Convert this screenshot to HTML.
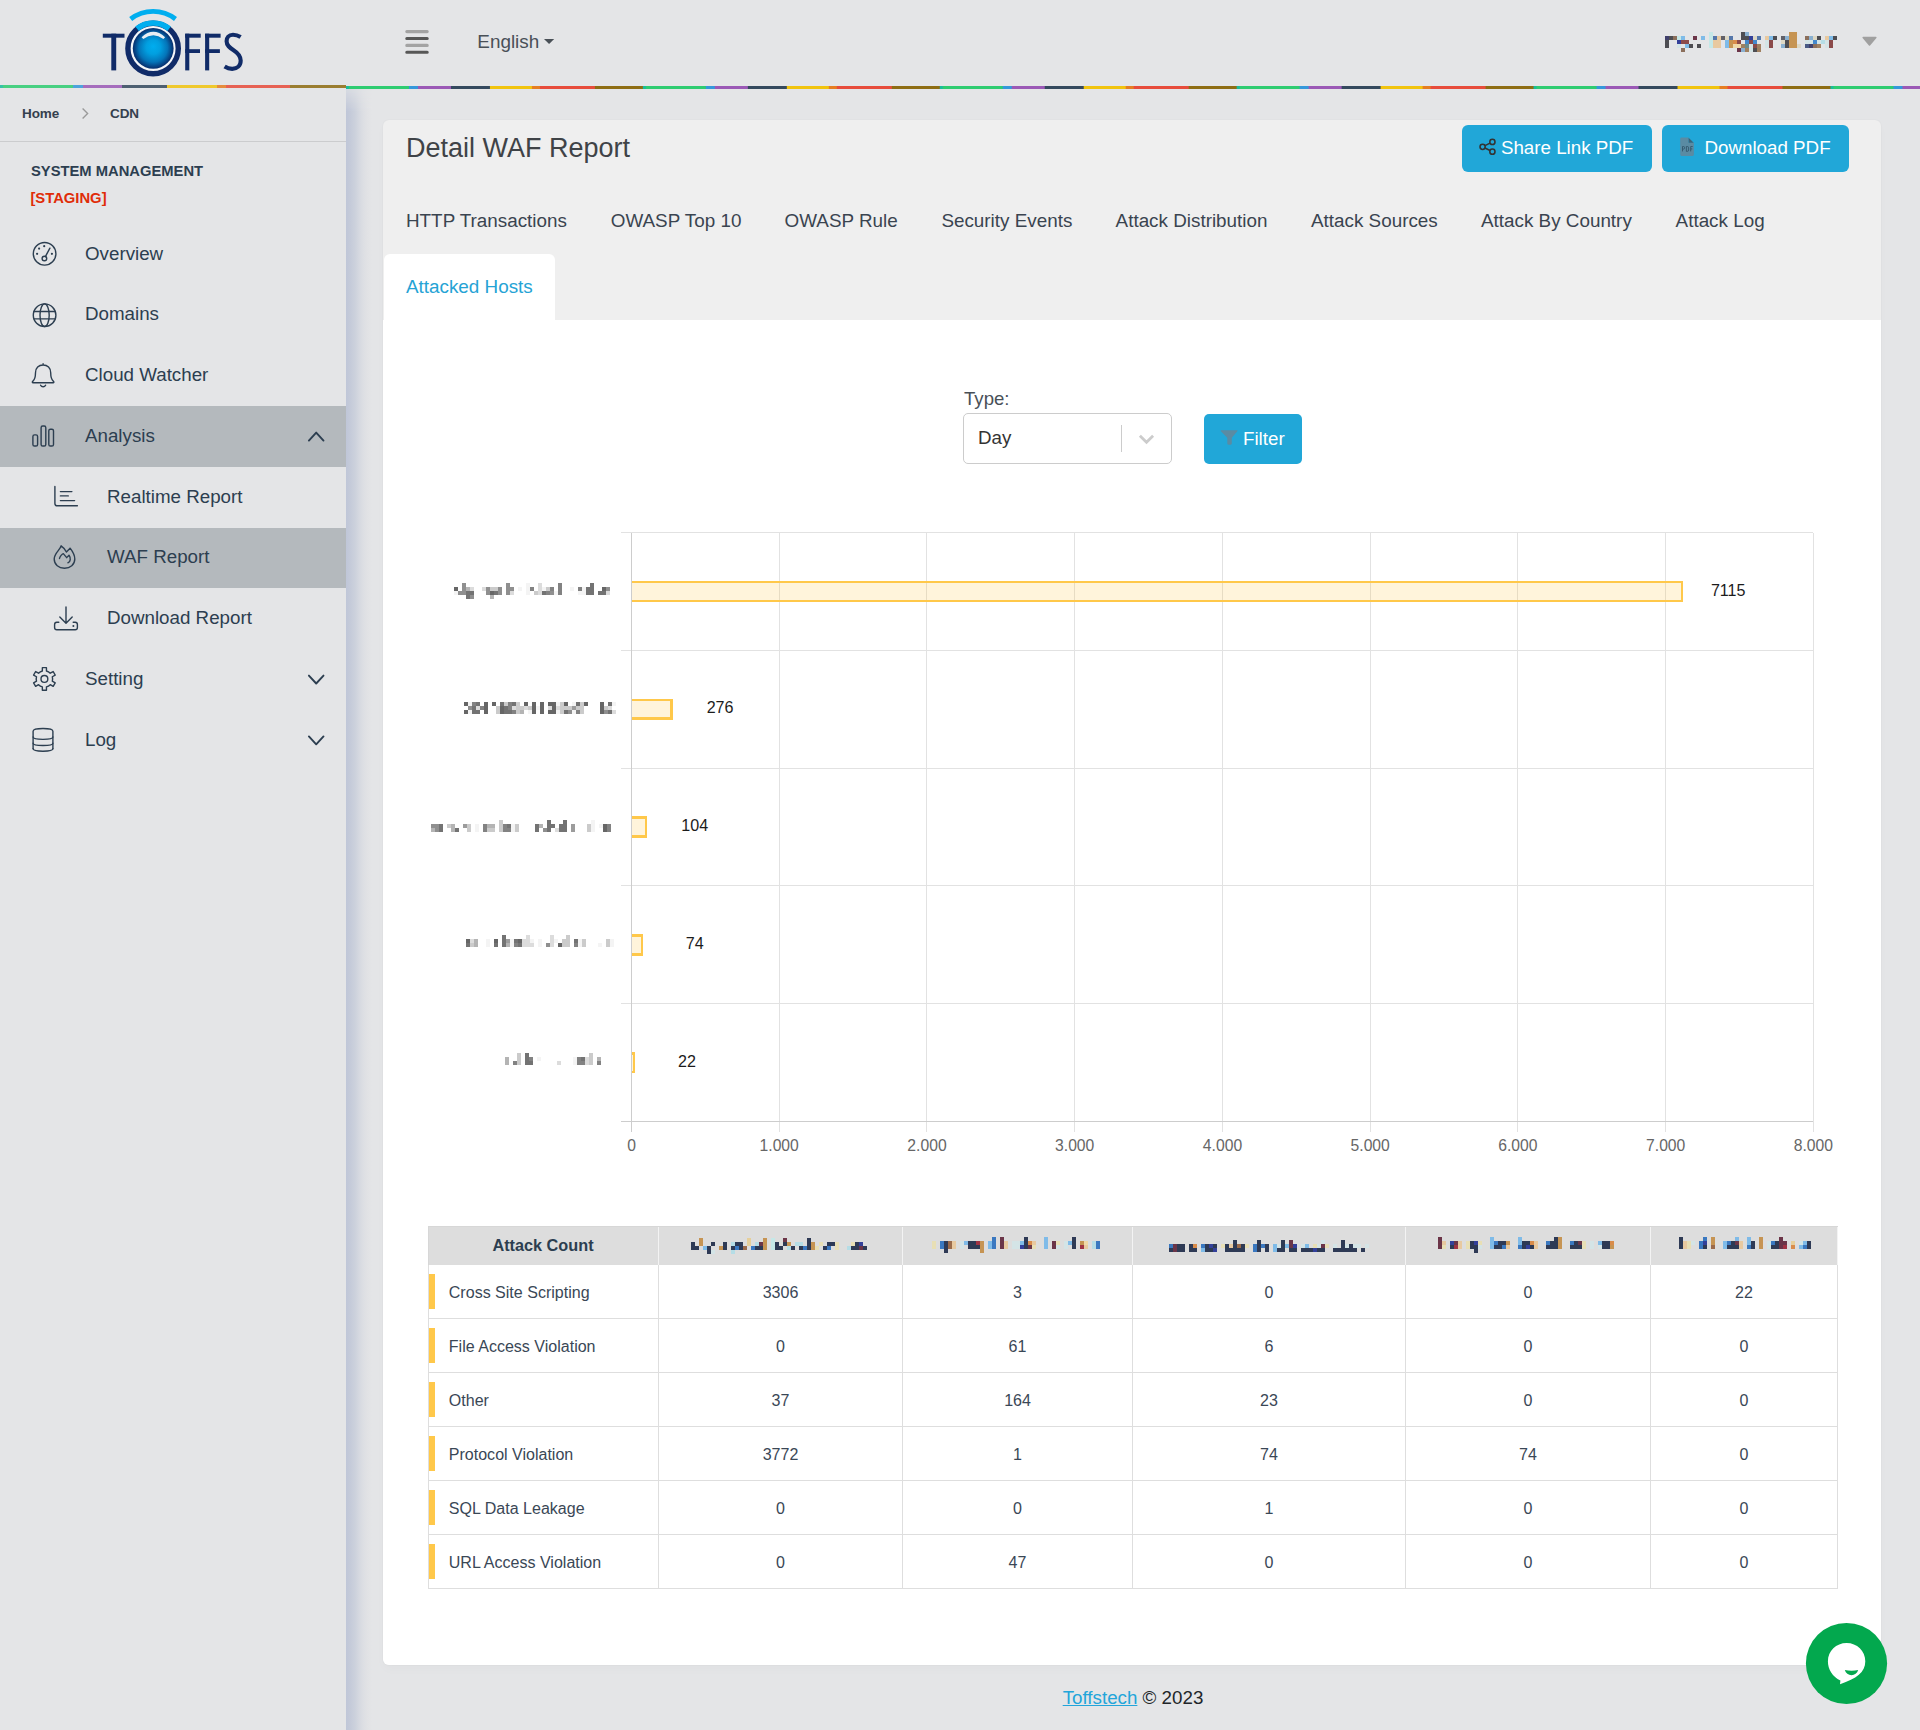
<!DOCTYPE html>
<html><head><meta charset="utf-8"><title>Detail WAF Report</title><style>
*{box-sizing:border-box;margin:0;padding:0}
html,body{width:1920px;height:1730px;overflow:hidden}
body{background:#e4e5e7;font-family:"Liberation Sans", sans-serif;color:#3f4347;position:relative;font-size:18.75px}
.abs{position:absolute}
.t{position:absolute;white-space:nowrap;line-height:1}
.stripe{position:absolute;height:3px;background-image:linear-gradient(to right,#1abc9c 0,#1abc9c 1%,#2ecc71 1%,#2ecc71 21.2%,#3498db 21.2%,#3498db 24.1%,#9b59b6 24.1%,#9b59b6 35.3%,#34495e 35.3%,#34495e 48.4%,#f1c40f 48.4%,#f1c40f 62.6%,#e67e22 62.6%,#e67e22 65.4%,#e74c3c 65.4%,#e74c3c 83.8%,#8e6d13 83.8%,#8e6d13 100%)}
#sb svg{position:absolute;overflow:visible}
.card{position:absolute;left:383px;top:120px;width:1498px;height:1545px;background:#efefef;border-radius:6px;overflow:hidden;box-shadow:0 0 2px rgba(4,9,20,.05),0 5px 10px rgba(4,9,20,.02)}
.card .body{position:absolute;left:0;top:200px;width:100%;bottom:0;background:#fff}
.tab{position:absolute;font-size:18.85px;color:#3a4450;white-space:nowrap;line-height:1}
.btn{position:absolute;background:#21a7d8;border-radius:6px;color:#fff;font-size:18.75px}
</style></head><body>

<svg class="abs" style="left:0;top:0" width="346" height="85" viewBox="0 0 346 85">
<defs><radialGradient id="ball" cx="0.5" cy="0.5" r="0.5" fx="0.5" fy="0.45">
<stop offset="0" stop-color="#00adef"/><stop offset="0.35" stop-color="#019fe0"/><stop offset="0.7" stop-color="#0474b8"/><stop offset="0.92" stop-color="#063f80"/><stop offset="1" stop-color="#072f6c"/></radialGradient></defs>
<g fill="#102b68">
<rect x="102.8" y="33.7" width="21.7" height="4"/><rect x="111.3" y="33.7" width="4.9" height="36.7"/>
<rect x="185.2" y="33.7" width="4.1" height="36.7"/><rect x="185.2" y="33.7" width="15.5" height="4"/><rect x="185.2" y="49.2" width="14.8" height="3.8"/>
<rect x="205.1" y="33.7" width="4.1" height="36.7"/><rect x="205.1" y="33.7" width="15.5" height="4"/><rect x="205.1" y="49.2" width="14.8" height="3.8"/>
</g>
<path d="M240.6 37 C238 35.4 235.4 34.8 233 34.8 C228.8 34.8 226.6 37.6 226.6 41.2 C226.6 45.4 229.6 47.6 233.6 50.2 C237.8 52.9 240.7 55.6 240.7 60.6 C240.7 65.6 237.2 68.9 232.2 68.9 C229.4 68.9 226.8 68 224.6 66.6" fill="none" stroke="#102b68" stroke-width="4.1"/>
<circle cx="153.1" cy="48.2" r="22.6" fill="#f4f6f9"/>
<circle cx="153.1" cy="48.5" r="25.2" fill="none" stroke="#102b68" stroke-width="5.4"/>
<circle cx="153.2" cy="48.4" r="20.4" fill="url(#ball)"/>
<path d="M130.70 19.00 A36.80 36.80 0 0 1 175.50 19.00" fill="none" stroke="#00aeef" stroke-width="4.9"/>
<path d="M137.04 28.78 A25.20 25.20 0 0 1 169.16 28.78" fill="none" stroke="#00aeef" stroke-width="5.6"/>
<path d="M141.6 37.2 Q153.3 26.5 165.1 37.2 L163.4 38.9 Q153.3 31.6 143.3 38.9 Z" fill="#e9eef3"/>
</svg>
<div class="stripe" style="left:0;top:85px;width:346px;opacity:.86"></div>
<div class="stripe" style="left:346px;top:86px;width:1574px;background-size:296.9px 3px"></div>
<svg class="abs" style="left:400px;top:25px" width="34" height="34" viewBox="400 25 34 34">
<g stroke-linecap="round" stroke-width="3.1"><path d="M406.8 31.6H427.2M406.8 45.4H427.2" stroke="#a3a3a3"/><path d="M406.8 38.5H427.2M406.8 52.2H427.2" stroke="#575757"/></g></svg>
<div class="t" style="left:477.3px;top:33.4px;font-size:18.9px;color:#495057">English</div>
<svg class="abs" style="left:544px;top:39px" width="11" height="6"><path d="M0 0H10.2L5.1 5.1Z" fill="#495057"/></svg>
<svg class="abs" style="left:1660px;top:28px" width="190" height="30" viewBox="1660 28 190 30" shape-rendering="crispEdges"><rect x="1709.0" y="31.7" width="4" height="4" fill="#c5e8e8"/><rect x="1741.0" y="31.7" width="4" height="4" fill="#4d4d52"/><rect x="1745.0" y="31.7" width="4" height="4" fill="#8ab0d0"/><rect x="1789.0" y="31.7" width="8" height="4" fill="#c69453"/><rect x="1665.0" y="35.7" width="4" height="4" fill="#3f3f6b"/><rect x="1669.0" y="35.7" width="4" height="4" fill="#4d4d52"/><rect x="1673.0" y="35.7" width="4" height="4" fill="#8b6f5c"/><rect x="1677.0" y="35.7" width="4" height="4" fill="#c5e8e8"/><rect x="1681.0" y="35.7" width="4" height="4" fill="#7fbbe8"/><rect x="1693.0" y="35.7" width="4" height="4" fill="#6b3548"/><rect x="1701.0" y="35.7" width="4" height="4" fill="#7fbbe8"/><rect x="1709.0" y="35.7" width="4" height="4" fill="#c5e8e8"/><rect x="1713.0" y="35.7" width="4" height="4" fill="#5577aa"/><rect x="1717.0" y="35.7" width="4" height="4" fill="#e8c9a0"/><rect x="1721.0" y="35.7" width="4" height="4" fill="#606068"/><rect x="1725.0" y="35.7" width="4" height="4" fill="#ddd8c5"/><rect x="1729.0" y="35.7" width="4" height="4" fill="#5577aa"/><rect x="1741.0" y="35.7" width="8" height="4" fill="#4d4d52"/><rect x="1749.0" y="35.7" width="4" height="4" fill="#33409a"/><rect x="1753.0" y="35.7" width="4" height="4" fill="#ddd8c5"/><rect x="1757.0" y="35.7" width="4" height="4" fill="#5577aa"/><rect x="1765.0" y="35.7" width="4" height="4" fill="#e8c9a0"/><rect x="1769.0" y="35.7" width="4" height="4" fill="#7fbbe8"/><rect x="1773.0" y="35.7" width="4" height="4" fill="#4d4d52"/><rect x="1781.0" y="35.7" width="4" height="4" fill="#606068"/><rect x="1785.0" y="35.7" width="4" height="4" fill="#8ab0d0"/><rect x="1789.0" y="35.7" width="8" height="4" fill="#c69453"/><rect x="1805.0" y="35.7" width="4" height="4" fill="#8b6f5c"/><rect x="1809.0" y="35.7" width="4" height="4" fill="#8ab0d0"/><rect x="1813.0" y="35.7" width="4" height="4" fill="#ddd8c5"/><rect x="1817.0" y="35.7" width="4" height="4" fill="#4d4d52"/><rect x="1825.0" y="35.7" width="4" height="4" fill="#e8c9a0"/><rect x="1829.0" y="35.7" width="4" height="4" fill="#7fbbe8"/><rect x="1833.0" y="35.7" width="4" height="4" fill="#4d4d52"/><rect x="1665.0" y="39.7" width="4" height="4" fill="#4d4d52"/><rect x="1677.0" y="39.7" width="4" height="4" fill="#33409a"/><rect x="1681.0" y="39.7" width="8" height="4" fill="#8b4a4a"/><rect x="1709.0" y="39.7" width="4" height="4" fill="#c5e8e8"/><rect x="1713.0" y="39.7" width="8" height="4" fill="#e8c9a0"/><rect x="1725.0" y="39.7" width="4" height="4" fill="#7fbbe8"/><rect x="1729.0" y="39.7" width="4" height="4" fill="#c69453"/><rect x="1733.0" y="39.7" width="4" height="4" fill="#d98c4a"/><rect x="1737.0" y="39.7" width="4" height="4" fill="#8b4a4a"/><rect x="1745.0" y="39.7" width="4" height="4" fill="#4488cc"/><rect x="1749.0" y="39.7" width="4" height="4" fill="#8b4a4a"/><rect x="1753.0" y="39.7" width="4" height="4" fill="#4488cc"/><rect x="1765.0" y="39.7" width="4" height="4" fill="#d4e4e6"/><rect x="1769.0" y="39.7" width="4" height="4" fill="#8b4a4a"/><rect x="1781.0" y="39.7" width="4" height="4" fill="#ddd8c5"/><rect x="1785.0" y="39.7" width="4" height="4" fill="#4d4d52"/><rect x="1789.0" y="39.7" width="8" height="4" fill="#c69453"/><rect x="1805.0" y="39.7" width="8" height="4" fill="#d4e4e6"/><rect x="1813.0" y="39.7" width="4" height="4" fill="#4488cc"/><rect x="1817.0" y="39.7" width="4" height="4" fill="#d4e4e6"/><rect x="1821.0" y="39.7" width="4" height="4" fill="#b5dde6"/><rect x="1825.0" y="39.7" width="4" height="4" fill="#d4e4e6"/><rect x="1829.0" y="39.7" width="4" height="4" fill="#8b4a4a"/><rect x="1665.0" y="43.7" width="4" height="4" fill="#4d4d52"/><rect x="1677.0" y="43.7" width="4" height="4" fill="#d4e4e6"/><rect x="1685.0" y="43.7" width="4" height="4" fill="#7fbbe8"/><rect x="1689.0" y="43.7" width="4" height="4" fill="#4d4d52"/><rect x="1697.0" y="43.7" width="4" height="4" fill="#4d4d52"/><rect x="1709.0" y="43.7" width="4" height="4" fill="#c5e8e8"/><rect x="1713.0" y="43.7" width="8" height="4" fill="#e8c9a0"/><rect x="1725.0" y="43.7" width="4" height="4" fill="#7fbbe8"/><rect x="1729.0" y="43.7" width="4" height="4" fill="#c69453"/><rect x="1733.0" y="43.7" width="8" height="4" fill="#f0d8a8"/><rect x="1741.0" y="43.7" width="4" height="4" fill="#a08060"/><rect x="1745.0" y="43.7" width="4" height="4" fill="#6d8a8a"/><rect x="1749.0" y="43.7" width="4" height="4" fill="#d4e4e6"/><rect x="1753.0" y="43.7" width="4" height="4" fill="#8b4a4a"/><rect x="1757.0" y="43.7" width="4" height="4" fill="#a08060"/><rect x="1765.0" y="43.7" width="4" height="4" fill="#d4e4e6"/><rect x="1769.0" y="43.7" width="4" height="4" fill="#8b4a4a"/><rect x="1781.0" y="43.7" width="4" height="4" fill="#8ab0d0"/><rect x="1785.0" y="43.7" width="4" height="4" fill="#4d4d52"/><rect x="1789.0" y="43.7" width="8" height="4" fill="#c69453"/><rect x="1797.0" y="43.7" width="4" height="4" fill="#ddd8c5"/><rect x="1805.0" y="43.7" width="4" height="4" fill="#4a5a85"/><rect x="1809.0" y="43.7" width="4" height="4" fill="#3f3f6b"/><rect x="1813.0" y="43.7" width="4" height="4" fill="#8b6f5c"/><rect x="1817.0" y="43.7" width="4" height="4" fill="#a08060"/><rect x="1825.0" y="43.7" width="4" height="4" fill="#d4e4e6"/><rect x="1829.0" y="43.7" width="4" height="4" fill="#8b4a4a"/><rect x="1681.0" y="47.7" width="4" height="4" fill="#8b6f5c"/><rect x="1737.0" y="47.7" width="4" height="4" fill="#6b3548"/><rect x="1741.0" y="47.7" width="4" height="4" fill="#8ab0d0"/><rect x="1745.0" y="47.7" width="4" height="4" fill="#a08060"/><rect x="1749.0" y="47.7" width="4" height="4" fill="#d4e4e6"/><rect x="1753.0" y="47.7" width="4" height="4" fill="#4d4d52"/><rect x="1757.0" y="47.7" width="4" height="4" fill="#a08060"/></svg>
<svg class="abs" style="left:1860px;top:35px" width="20" height="13" viewBox="1860 35 20 13"><path d="M1863.2 37.6H1875.8L1869.5 45Z" fill="#a0a0a0" stroke="#a0a0a0" stroke-width="1.6" stroke-linejoin="round"/></svg>

<div class="t" style="left:22px;top:106.7px;font-size:13.5px;font-weight:bold;color:#34404e;letter-spacing:-0.1px">Home</div>
<svg class="abs" style="left:80px;top:106px" width="12" height="14"><path d="M2.6 2.6L7.6 7.6L2.6 12.4" fill="none" stroke="#9a9a9a" stroke-width="1.4"/></svg>
<div class="t" style="left:110px;top:106.7px;font-size:13.5px;font-weight:bold;color:#34404e;letter-spacing:-0.1px">CDN</div>
<div class="abs" style="left:0;top:141px;width:346px;height:1px;background:#cbccce"></div>
<div class="t" style="left:31px;top:164.1px;font-size:14.75px;font-weight:bold;color:#2c3e50">SYSTEM MANAGEMENT</div>
<div class="t" style="left:30.4px;top:191.1px;font-size:14.8px;font-weight:bold;color:#e02c08">[STAGING]</div>
<div id="sb"><div class="t" style="left:85px;top:244.70px;font-size:18.75px;color:#2c3e50">Overview</div><div class="t" style="left:85px;top:305.45px;font-size:18.75px;color:#2c3e50">Domains</div><div class="t" style="left:85px;top:366.20px;font-size:18.75px;color:#2c3e50">Cloud Watcher</div><div class="abs" style="left:0;top:406.2px;width:346px;height:60.4px;background:#b4b9bd"></div><div class="t" style="left:85px;top:426.95px;font-size:18.75px;color:#2c3e50">Analysis</div><div class="t" style="left:107px;top:487.70px;font-size:18.75px;color:#2c3e50">Realtime Report</div><div class="abs" style="left:0;top:528.1px;width:346px;height:59.8px;background:#b4b9bd"></div><div class="t" style="left:107px;top:548.45px;font-size:18.75px;color:#2c3e50">WAF Report</div><div class="t" style="left:107px;top:609.20px;font-size:18.75px;color:#2c3e50">Download Report</div><div class="t" style="left:85px;top:669.95px;font-size:18.75px;color:#2c3e50">Setting</div><div class="t" style="left:85px;top:730.70px;font-size:18.75px;color:#2c3e50">Log</div><svg style="left:0;top:0" width="346" height="800" viewBox="0 0 346 800"><g stroke="#2c3e50" fill="none" stroke-width="1.4" stroke-linecap="round" stroke-linejoin="round"><circle cx="44.6" cy="253.8" r="11.3"/><circle cx="44.4" cy="258.5" r="2.3"/><path d="M45.5 256.40000000000003L49.9 248.20000000000002"/></g>
<g fill="#2c3e50"><circle cx="37.1" cy="253.8" r="1.1"/><circle cx="39.1" cy="248.60000000000002" r="1.1"/><circle cx="44.2" cy="246.20000000000002" r="1.1"/><circle cx="51.9" cy="253.8" r="1.1"/></g><g stroke="#2c3e50" fill="none" stroke-width="1.4" stroke-linecap="round" stroke-linejoin="round"><circle cx="44.6" cy="315.15000000000003" r="11.3"/><ellipse cx="44.6" cy="315.15000000000003" rx="4.6" ry="11.3"/><path d="M34.0 311.45000000000005H55.2M34.0 318.85H55.2"/></g><g stroke="#2c3e50" fill="none" stroke-width="1.4" stroke-linecap="round" stroke-linejoin="round"><path d="M43.1 363.8V365.0M32.8 382.7H53.400000000000006C54.0 382.7 54.1 381.8 53.5 381.40000000000003C50.7 379.0 50.7 375.8 50.7 372.7C50.7 368.0 47.5 365.0 43.1 365.0C38.7 365.0 35.5 368.0 35.5 372.7C35.5 375.8 35.5 379.0 32.7 381.40000000000003C32.1 381.8 32.2 382.7 32.8 382.7Z"/><path d="M40.6 385.2C41.6 387.2 44.6 387.2 45.6 385.2"/></g><g stroke="#2c3e50" fill="none" stroke-width="1.4" stroke-linecap="round" stroke-linejoin="round"><rect x="32.9" y="434.85" width="4.7" height="11.2" rx="1.6"/><rect x="41.1" y="426.05" width="4.7" height="20" rx="1.6"/><rect x="48.8" y="429.25" width="4.7" height="16.8" rx="1.6"/></g><path d="M308.9 440.6L316.2 432.6L323.5 440.6" fill="none" stroke="#2c3e50" stroke-width="1.9" stroke-linecap="round" stroke-linejoin="round"/><g stroke="#2c3e50" fill="none" stroke-width="1.4" stroke-linecap="round" stroke-linejoin="round"><path d="M54.9 486.5V503.40000000000003Q54.9 505.8 57.3 505.8H77.4"/><path d="M60.4 491.6H71.9M60.4 495.90000000000003H68.3M60.4 500.6H74.6"/></g><g stroke="#2c3e50" fill="none" stroke-width="1.4" stroke-linecap="round" stroke-linejoin="round"><path d="M61.1 545.8499999999999C60.3 549.75 54.2 553.15 54.2 559.05C54.2 564.75 58.8 568.25 64.5 568.25C70.2 568.25 74.8 564.75 74.8 559.05C74.8 554.75 72.5 551.25 70.1 548.15L66.4 552.05C65.4 549.75 63.2 547.25 61.1 545.8499999999999Z"/><path d="M59.5 558.4499999999999C59.9 556.3499999999999 62.1 554.05 63.3 553.65L66.7 557.65L69.0 555.15C70.9 557.8499999999999 70.8 561.65 67.9 562.8499999999999"/></g><g stroke="#2c3e50" fill="none" stroke-width="1.4" stroke-linecap="round" stroke-linejoin="round"><path d="M66 606.9V622.9M59.8 617.0L66 623.1999999999999L72.2 617.0"/><path d="M58.8 622.3H56.8Q54.6 622.3 54.6 624.5V627.5Q54.6 629.6999999999999 56.8 629.6999999999999H75.2Q77.4 629.6999999999999 77.4 627.5V624.5Q77.4 622.3 75.2 622.3H73.2"/></g><circle cx="73.4" cy="625.9" r="1" fill="#2c3e50"/><g stroke="#2c3e50" fill="none" stroke-width="1.4" stroke-linecap="round" stroke-linejoin="round"><path d="M42.35 671.01L42.35 667.65L46.45 667.65L46.45 671.01A8.20 8.20 0 0 1 50.25 673.20L53.16 671.52L55.21 675.08L52.30 676.76A8.20 8.20 0 0 1 52.30 681.14L55.21 682.82L53.16 686.38L50.25 684.70A8.20 8.20 0 0 1 46.45 686.89L46.45 690.25L42.35 690.25L42.35 686.89A8.20 8.20 0 0 1 38.55 684.70L35.64 686.38L33.59 682.82L36.50 681.14A8.20 8.20 0 0 1 36.50 676.76L33.59 675.08L35.64 671.52L38.55 673.20A8.20 8.20 0 0 1 42.35 671.01Z"/><circle cx="44.4" cy="678.9499999999999" r="3.4"/></g><path d="M308.9 675.6L316.2 683.5L323.5 675.6" fill="none" stroke="#2c3e50" stroke-width="1.9" stroke-linecap="round" stroke-linejoin="round"/><g stroke="#2c3e50" fill="none" stroke-width="1.4" stroke-linecap="round" stroke-linejoin="round"><path d="M33.1 748.8V731.1999999999999C33.1 729.3 37.8 728.55 43.0 728.55C48.2 728.55 52.9 729.3 52.9 731.1999999999999V748.8"/><path d="M33.1 737.0C33.1 738.7625 37.8 739.35 43.0 739.35C48.2 739.35 52.9 738.7625 52.9 737.0"/><path d="M33.1 743.1999999999999C33.1 744.925 37.8 745.4999999999999 43.0 745.4999999999999C48.2 745.4999999999999 52.9 744.925 52.9 743.1999999999999"/><path d="M33.1 748.8C33.1 750.5999999999999 37.8 751.1999999999999 43.0 751.1999999999999C48.2 751.1999999999999 52.9 750.5999999999999 52.9 748.8"/></g><path d="M308.9 736.4L316.2 744.3L323.5 736.4" fill="none" stroke="#2c3e50" stroke-width="1.9" stroke-linecap="round" stroke-linejoin="round"/></svg></div>
<div class="abs" style="left:346px;top:89px;width:26px;height:1641px;background:linear-gradient(to right,#bfc6d8 0,#c4cad9 15%,#ccd1dc 35%,#d5d8e0 50%,#dcdee3 65%,#e1e2e5 82%,#e4e5e7 100%);-webkit-mask-image:linear-gradient(to bottom,rgba(0,0,0,.35) 0,#000 22px);mask-image:linear-gradient(to bottom,rgba(0,0,0,.35) 0,#000 22px)"></div>

<div class="card">
<div class="body"></div>
<div class="t" style="left:23px;top:14.8px;font-size:27px;color:#3f4347">Detail WAF Report</div>
<div class="tab" style="left:23px;top:91.80000000000001px">HTTP Transactions</div><div class="tab" style="left:227.79999999999995px;top:91.80000000000001px">OWASP Top 10</div><div class="tab" style="left:401.6px;top:91.80000000000001px">OWASP Rule</div><div class="tab" style="left:558.4px;top:91.80000000000001px">Security Events</div><div class="tab" style="left:732.5999999999999px;top:91.80000000000001px">Attack Distribution</div><div class="tab" style="left:928px;top:91.80000000000001px">Attack Sources</div><div class="tab" style="left:1098px;top:91.80000000000001px">Attack By Country</div><div class="tab" style="left:1292.6px;top:91.80000000000001px">Attack Log</div>
<div class="abs" style="left:1px;top:133.7px;width:171px;height:70px;background:#fff;border-radius:6px 6px 0 0"></div>
<div class="tab" style="left:23px;top:157.8px;color:#25a3d5">Attacked Hosts</div>
<div class="btn" style="left:1079px;top:5px;width:190px;height:47px"><span class="t" style="left:38.9px;top:13.5px;color:#fff">Share Link PDF</span>
<svg class="abs" style="left:16px;top:13px" width="20" height="20" viewBox="1478 138 20 20"><g fill="none" stroke="#333" stroke-width="1.55"><circle cx="1492.4" cy="141.9" r="2.6"/><circle cx="1482.6" cy="146.8" r="2.6"/><circle cx="1492.4" cy="151.7" r="2.6"/><path d="M1485 145.6L1490 143.1M1485 148L1490 150.5"/></g></svg></div>
<div class="btn" style="left:1279px;top:5px;width:187px;height:47px"><span class="t" style="left:42.5px;top:13.5px;color:#fff">Download PDF</span>
<svg class="abs" style="left:16px;top:10px" width="20" height="24" viewBox="1678 135 20 24"><path d="M1681.5 137.5H1688.6V142.7H1693.9V154.6Q1693.9 155.9 1692.6 155.9H1681.5Q1680.2 155.9 1680.2 154.6V138.8Q1680.2 137.5 1681.5 137.5Z" fill="#5a8ba3"/><path d="M1688.6 137.7L1693.7 142.7H1688.6Z" fill="#3c6378"/><g fill="none" stroke="#35596e" stroke-width="0.95"><path d="M1682.5 151.4V146.5H1683.5Q1684.6 146.5 1684.6 147.8Q1684.6 149.1 1683.5 149.1H1682.5"/><path d="M1686.4 146.5V151.4H1687.3Q1688.6 151.4 1688.6 150.1V147.8Q1688.6 146.5 1687.3 146.5Z"/><path d="M1690.7 151.4V146.5H1692.7M1690.7 148.9H1692.3"/></g></svg></div>
</div>

<div class="t" style="left:964px;top:389.6px;font-size:18.6px;color:#495057">Type:</div>
<div class="abs" style="left:963px;top:413px;width:209px;height:51px;border:1px solid #ccc;border-radius:5px;background:#fff"></div>
<div class="t" style="left:978px;top:428.5px;font-size:18.75px;color:#333">Day</div>
<div class="abs" style="left:1121px;top:425px;width:1px;height:27px;background:#ccc"></div>
<svg class="abs" style="left:1136px;top:430px" width="22" height="18" viewBox="1136 430 22 18"><path d="M1139.9 435.8L1146.5 442.3L1153.1 435.8" fill="none" stroke="#ccc" stroke-width="2.8" stroke-linecap="butt" stroke-linejoin="miter"/></svg>
<div class="btn" style="left:1204px;top:414px;width:98px;height:50px;border-radius:5px"><span class="t" style="left:39px;top:15.6px;color:#fff">Filter</span>
<svg class="abs" style="left:16px;top:16px" width="18" height="16" viewBox="0 0 18 16"><path d="M1.3 0.2H16.9Q18.1 0.2 17.3 1.2L11.8 7.7V13.6Q11.8 14.7 10.7 14.7H8.4Q7.3 14.7 7.3 13.6V7.7L0.9 1.2Q0.1 0.2 1.3 0.2Z" fill="#5a8ba3"/></svg></div>
<svg class="abs" style="left:420px;top:520px" width="1440" height="640" viewBox="420 520 1440 640" shape-rendering="crispEdges"><rect x="778.74" y="532.5" width="1" height="599.0999999999999" fill="#e2e2e2"/><rect x="926.48" y="532.5" width="1" height="599.0999999999999" fill="#e2e2e2"/><rect x="1074.21" y="532.5" width="1" height="599.0999999999999" fill="#e2e2e2"/><rect x="1221.95" y="532.5" width="1" height="599.0999999999999" fill="#e2e2e2"/><rect x="1369.69" y="532.5" width="1" height="599.0999999999999" fill="#e2e2e2"/><rect x="1517.43" y="532.5" width="1" height="599.0999999999999" fill="#e2e2e2"/><rect x="1665.16" y="532.5" width="1" height="599.0999999999999" fill="#e2e2e2"/><rect x="1812.90" y="532.5" width="1" height="599.0999999999999" fill="#e2e2e2"/><rect x="621" y="532.00" width="1192.4" height="1" fill="#e2e2e2"/><rect x="621" y="649.82" width="1192.4" height="1" fill="#e2e2e2"/><rect x="621" y="767.64" width="1192.4" height="1" fill="#e2e2e2"/><rect x="621" y="885.46" width="1192.4" height="1" fill="#e2e2e2"/><rect x="621" y="1003.28" width="1192.4" height="1" fill="#e2e2e2"/><rect x="621" y="1121.00" width="1192.4" height="1.2" fill="#cdcdcd"/><rect x="630.90" y="532.5" width="1.2" height="599.0999999999999" fill="#cdcdcd"/><rect x="632.10" y="583.26" width="1048.65" height="16.3" fill="rgba(255,200,74,0.2)"/><rect x="632.10" y="580.76" width="1051.15" height="2.5" fill="#ffc84a"/><rect x="632.10" y="599.56" width="1051.15" height="2.5" fill="#ffc84a"/><rect x="1680.75" y="580.76" width="2.5" height="21.3" fill="#ffc84a"/><rect x="632.10" y="701.08" width="38.28" height="16.3" fill="rgba(255,200,74,0.2)"/><rect x="632.10" y="698.58" width="40.78" height="2.5" fill="#ffc84a"/><rect x="632.10" y="717.38" width="40.78" height="2.5" fill="#ffc84a"/><rect x="670.38" y="698.58" width="2.5" height="21.3" fill="#ffc84a"/><rect x="632.10" y="818.90" width="12.86" height="16.3" fill="rgba(255,200,74,0.2)"/><rect x="632.10" y="816.40" width="15.36" height="2.5" fill="#ffc84a"/><rect x="632.10" y="835.20" width="15.36" height="2.5" fill="#ffc84a"/><rect x="644.96" y="816.40" width="2.5" height="21.3" fill="#ffc84a"/><rect x="632.10" y="936.72" width="8.43" height="16.3" fill="rgba(255,200,74,0.2)"/><rect x="632.10" y="934.22" width="10.93" height="2.5" fill="#ffc84a"/><rect x="632.10" y="953.02" width="10.93" height="2.5" fill="#ffc84a"/><rect x="640.53" y="934.22" width="2.5" height="21.3" fill="#ffc84a"/><rect x="632.10" y="1054.54" width="0.75" height="16.3" fill="rgba(255,200,74,0.2)"/><rect x="632.10" y="1052.04" width="3.25" height="2.5" fill="#ffc84a"/><rect x="632.10" y="1070.84" width="3.25" height="2.5" fill="#ffc84a"/><rect x="632.85" y="1052.04" width="2.5" height="21.3" fill="#ffc84a"/><rect x="462.0" y="583.0" width="4" height="4" fill="#8f8f8f"/><rect x="506.0" y="583.0" width="4" height="4" fill="#8f8f8f"/><rect x="526.0" y="583.0" width="4" height="4" fill="#f4f4f4"/><rect x="538.0" y="583.0" width="4" height="4" fill="#dcdcdc"/><rect x="558.0" y="583.0" width="4" height="4" fill="#828282"/><rect x="590.0" y="583.0" width="4" height="4" fill="#737373"/><rect x="454.0" y="587.0" width="4" height="4" fill="#666666"/><rect x="462.0" y="587.0" width="4" height="4" fill="#8f8f8f"/><rect x="466.0" y="587.0" width="4" height="4" fill="#b4b4b4"/><rect x="470.0" y="587.0" width="4" height="4" fill="#dcdcdc"/><rect x="482.0" y="587.0" width="4" height="4" fill="#dcdcdc"/><rect x="486.0" y="587.0" width="4" height="4" fill="#8f8f8f"/><rect x="490.0" y="587.0" width="8" height="4" fill="#cbcbcb"/><rect x="498.0" y="587.0" width="4" height="4" fill="#8f8f8f"/><rect x="506.0" y="587.0" width="8" height="4" fill="#8f8f8f"/><rect x="518.0" y="587.0" width="4" height="4" fill="#f4f4f4"/><rect x="526.0" y="587.0" width="4" height="4" fill="#f4f4f4"/><rect x="530.0" y="587.0" width="4" height="4" fill="#828282"/><rect x="538.0" y="587.0" width="4" height="4" fill="#dcdcdc"/><rect x="542.0" y="587.0" width="4" height="4" fill="#f4f4f4"/><rect x="546.0" y="587.0" width="4" height="4" fill="#cbcbcb"/><rect x="550.0" y="587.0" width="4" height="4" fill="#828282"/><rect x="558.0" y="587.0" width="4" height="4" fill="#828282"/><rect x="570.0" y="587.0" width="4" height="4" fill="#f4f4f4"/><rect x="578.0" y="587.0" width="4" height="4" fill="#828282"/><rect x="582.0" y="587.0" width="4" height="4" fill="#f4f4f4"/><rect x="586.0" y="587.0" width="8" height="4" fill="#737373"/><rect x="602.0" y="587.0" width="4" height="4" fill="#666666"/><rect x="606.0" y="587.0" width="4" height="4" fill="#8f8f8f"/><rect x="454.0" y="591.0" width="4" height="4" fill="#f4f4f4"/><rect x="458.0" y="591.0" width="8" height="4" fill="#8f8f8f"/><rect x="466.0" y="591.0" width="8" height="4" fill="#737373"/><rect x="486.0" y="591.0" width="4" height="4" fill="#8f8f8f"/><rect x="490.0" y="591.0" width="4" height="4" fill="#666666"/><rect x="494.0" y="591.0" width="4" height="4" fill="#737373"/><rect x="498.0" y="591.0" width="4" height="4" fill="#8f8f8f"/><rect x="506.0" y="591.0" width="4" height="4" fill="#8f8f8f"/><rect x="510.0" y="591.0" width="4" height="4" fill="#dcdcdc"/><rect x="526.0" y="591.0" width="4" height="4" fill="#f4f4f4"/><rect x="534.0" y="591.0" width="4" height="4" fill="#cbcbcb"/><rect x="538.0" y="591.0" width="4" height="4" fill="#dcdcdc"/><rect x="542.0" y="591.0" width="4" height="4" fill="#737373"/><rect x="546.0" y="591.0" width="4" height="4" fill="#828282"/><rect x="550.0" y="591.0" width="4" height="4" fill="#8f8f8f"/><rect x="554.0" y="591.0" width="4" height="4" fill="#f4f4f4"/><rect x="558.0" y="591.0" width="4" height="4" fill="#828282"/><rect x="578.0" y="591.0" width="8" height="4" fill="#f4f4f4"/><rect x="586.0" y="591.0" width="8" height="4" fill="#737373"/><rect x="598.0" y="591.0" width="8" height="4" fill="#737373"/><rect x="606.0" y="591.0" width="4" height="4" fill="#dcdcdc"/><rect x="466.0" y="595.0" width="4" height="4" fill="#737373"/><rect x="470.0" y="595.0" width="4" height="4" fill="#8f8f8f"/><rect x="490.0" y="595.0" width="4" height="4" fill="#b4b4b4"/><rect x="464.0" y="702.0" width="4" height="4" fill="#666666"/><rect x="468.0" y="702.0" width="4" height="4" fill="#f4f4f4"/><rect x="472.0" y="702.0" width="4" height="4" fill="#828282"/><rect x="476.0" y="702.0" width="4" height="4" fill="#737373"/><rect x="484.0" y="702.0" width="4" height="4" fill="#666666"/><rect x="492.0" y="702.0" width="4" height="4" fill="#666666"/><rect x="500.0" y="702.0" width="4" height="4" fill="#737373"/><rect x="504.0" y="702.0" width="4" height="4" fill="#cbcbcb"/><rect x="508.0" y="702.0" width="4" height="4" fill="#828282"/><rect x="512.0" y="702.0" width="4" height="4" fill="#737373"/><rect x="516.0" y="702.0" width="4" height="4" fill="#cbcbcb"/><rect x="524.0" y="702.0" width="4" height="4" fill="#666666"/><rect x="532.0" y="702.0" width="4" height="4" fill="#666666"/><rect x="540.0" y="702.0" width="4" height="4" fill="#666666"/><rect x="548.0" y="702.0" width="8" height="4" fill="#666666"/><rect x="556.0" y="702.0" width="4" height="4" fill="#f4f4f4"/><rect x="560.0" y="702.0" width="4" height="4" fill="#cbcbcb"/><rect x="564.0" y="702.0" width="4" height="4" fill="#666666"/><rect x="572.0" y="702.0" width="4" height="4" fill="#f4f4f4"/><rect x="576.0" y="702.0" width="4" height="4" fill="#737373"/><rect x="580.0" y="702.0" width="4" height="4" fill="#cbcbcb"/><rect x="584.0" y="702.0" width="4" height="4" fill="#666666"/><rect x="600.0" y="702.0" width="4" height="4" fill="#666666"/><rect x="608.0" y="702.0" width="4" height="4" fill="#737373"/><rect x="612.0" y="702.0" width="4" height="4" fill="#f4f4f4"/><rect x="468.0" y="706.0" width="4" height="4" fill="#8f8f8f"/><rect x="472.0" y="706.0" width="4" height="4" fill="#737373"/><rect x="476.0" y="706.0" width="4" height="4" fill="#dcdcdc"/><rect x="480.0" y="706.0" width="4" height="4" fill="#828282"/><rect x="484.0" y="706.0" width="4" height="4" fill="#666666"/><rect x="496.0" y="706.0" width="4" height="4" fill="#cbcbcb"/><rect x="500.0" y="706.0" width="4" height="4" fill="#666666"/><rect x="504.0" y="706.0" width="4" height="4" fill="#737373"/><rect x="508.0" y="706.0" width="4" height="4" fill="#828282"/><rect x="512.0" y="706.0" width="4" height="4" fill="#dcdcdc"/><rect x="516.0" y="706.0" width="8" height="4" fill="#cbcbcb"/><rect x="524.0" y="706.0" width="4" height="4" fill="#dcdcdc"/><rect x="528.0" y="706.0" width="4" height="4" fill="#cbcbcb"/><rect x="532.0" y="706.0" width="4" height="4" fill="#666666"/><rect x="536.0" y="706.0" width="4" height="4" fill="#f4f4f4"/><rect x="540.0" y="706.0" width="4" height="4" fill="#666666"/><rect x="548.0" y="706.0" width="4" height="4" fill="#dcdcdc"/><rect x="552.0" y="706.0" width="4" height="4" fill="#666666"/><rect x="556.0" y="706.0" width="4" height="4" fill="#dcdcdc"/><rect x="560.0" y="706.0" width="12" height="4" fill="#cbcbcb"/><rect x="572.0" y="706.0" width="4" height="4" fill="#9c9c9c"/><rect x="576.0" y="706.0" width="8" height="4" fill="#cbcbcb"/><rect x="600.0" y="706.0" width="4" height="4" fill="#666666"/><rect x="604.0" y="706.0" width="4" height="4" fill="#cbcbcb"/><rect x="608.0" y="706.0" width="4" height="4" fill="#dcdcdc"/><rect x="464.0" y="710.0" width="4" height="4" fill="#666666"/><rect x="468.0" y="710.0" width="4" height="4" fill="#f4f4f4"/><rect x="472.0" y="710.0" width="8" height="4" fill="#737373"/><rect x="484.0" y="710.0" width="4" height="4" fill="#666666"/><rect x="496.0" y="710.0" width="4" height="4" fill="#cbcbcb"/><rect x="500.0" y="710.0" width="4" height="4" fill="#666666"/><rect x="504.0" y="710.0" width="8" height="4" fill="#737373"/><rect x="512.0" y="710.0" width="4" height="4" fill="#828282"/><rect x="516.0" y="710.0" width="4" height="4" fill="#cbcbcb"/><rect x="520.0" y="710.0" width="4" height="4" fill="#b4b4b4"/><rect x="528.0" y="710.0" width="4" height="4" fill="#f4f4f4"/><rect x="532.0" y="710.0" width="4" height="4" fill="#666666"/><rect x="540.0" y="710.0" width="4" height="4" fill="#666666"/><rect x="548.0" y="710.0" width="8" height="4" fill="#666666"/><rect x="556.0" y="710.0" width="4" height="4" fill="#f4f4f4"/><rect x="560.0" y="710.0" width="4" height="4" fill="#cbcbcb"/><rect x="564.0" y="710.0" width="4" height="4" fill="#737373"/><rect x="568.0" y="710.0" width="4" height="4" fill="#8f8f8f"/><rect x="572.0" y="710.0" width="4" height="4" fill="#f4f4f4"/><rect x="576.0" y="710.0" width="4" height="4" fill="#828282"/><rect x="580.0" y="710.0" width="4" height="4" fill="#cbcbcb"/><rect x="600.0" y="710.0" width="4" height="4" fill="#666666"/><rect x="604.0" y="710.0" width="4" height="4" fill="#8f8f8f"/><rect x="608.0" y="710.0" width="4" height="4" fill="#737373"/><rect x="612.0" y="710.0" width="4" height="4" fill="#dcdcdc"/><rect x="499.0" y="820.0" width="4" height="4" fill="#cbcbcb"/><rect x="547.0" y="820.0" width="4" height="4" fill="#737373"/><rect x="563.0" y="820.0" width="4" height="4" fill="#737373"/><rect x="591.0" y="820.0" width="4" height="4" fill="#f4f4f4"/><rect x="431.0" y="824.0" width="8" height="4" fill="#8f8f8f"/><rect x="439.0" y="824.0" width="4" height="4" fill="#737373"/><rect x="447.0" y="824.0" width="4" height="4" fill="#cbcbcb"/><rect x="451.0" y="824.0" width="4" height="4" fill="#b4b4b4"/><rect x="463.0" y="824.0" width="4" height="4" fill="#9c9c9c"/><rect x="467.0" y="824.0" width="4" height="4" fill="#cbcbcb"/><rect x="475.0" y="824.0" width="4" height="4" fill="#f4f4f4"/><rect x="483.0" y="824.0" width="4" height="4" fill="#828282"/><rect x="487.0" y="824.0" width="8" height="4" fill="#b4b4b4"/><rect x="499.0" y="824.0" width="4" height="4" fill="#cbcbcb"/><rect x="503.0" y="824.0" width="4" height="4" fill="#828282"/><rect x="507.0" y="824.0" width="4" height="4" fill="#737373"/><rect x="511.0" y="824.0" width="4" height="4" fill="#f4f4f4"/><rect x="515.0" y="824.0" width="4" height="4" fill="#cbcbcb"/><rect x="535.0" y="824.0" width="4" height="4" fill="#737373"/><rect x="539.0" y="824.0" width="4" height="4" fill="#b4b4b4"/><rect x="547.0" y="824.0" width="8" height="4" fill="#737373"/><rect x="559.0" y="824.0" width="8" height="4" fill="#737373"/><rect x="571.0" y="824.0" width="4" height="4" fill="#9c9c9c"/><rect x="587.0" y="824.0" width="4" height="4" fill="#cbcbcb"/><rect x="591.0" y="824.0" width="4" height="4" fill="#f4f4f4"/><rect x="599.0" y="824.0" width="4" height="4" fill="#f4f4f4"/><rect x="603.0" y="824.0" width="4" height="4" fill="#666666"/><rect x="607.0" y="824.0" width="4" height="4" fill="#828282"/><rect x="431.0" y="828.0" width="4" height="4" fill="#b4b4b4"/><rect x="435.0" y="828.0" width="4" height="4" fill="#8f8f8f"/><rect x="439.0" y="828.0" width="4" height="4" fill="#737373"/><rect x="451.0" y="828.0" width="4" height="4" fill="#b4b4b4"/><rect x="455.0" y="828.0" width="4" height="4" fill="#737373"/><rect x="467.0" y="828.0" width="4" height="4" fill="#cbcbcb"/><rect x="475.0" y="828.0" width="4" height="4" fill="#f4f4f4"/><rect x="483.0" y="828.0" width="4" height="4" fill="#828282"/><rect x="487.0" y="828.0" width="8" height="4" fill="#cbcbcb"/><rect x="499.0" y="828.0" width="4" height="4" fill="#cbcbcb"/><rect x="503.0" y="828.0" width="8" height="4" fill="#828282"/><rect x="511.0" y="828.0" width="4" height="4" fill="#f4f4f4"/><rect x="515.0" y="828.0" width="4" height="4" fill="#cbcbcb"/><rect x="535.0" y="828.0" width="4" height="4" fill="#737373"/><rect x="543.0" y="828.0" width="4" height="4" fill="#8f8f8f"/><rect x="547.0" y="828.0" width="4" height="4" fill="#737373"/><rect x="555.0" y="828.0" width="4" height="4" fill="#dcdcdc"/><rect x="559.0" y="828.0" width="8" height="4" fill="#737373"/><rect x="571.0" y="828.0" width="4" height="4" fill="#9c9c9c"/><rect x="587.0" y="828.0" width="4" height="4" fill="#cbcbcb"/><rect x="591.0" y="828.0" width="4" height="4" fill="#f4f4f4"/><rect x="603.0" y="828.0" width="4" height="4" fill="#666666"/><rect x="607.0" y="828.0" width="4" height="4" fill="#828282"/><rect x="502.0" y="935.0" width="4" height="4" fill="#737373"/><rect x="526.0" y="935.0" width="4" height="4" fill="#dcdcdc"/><rect x="550.0" y="935.0" width="4" height="4" fill="#dcdcdc"/><rect x="566.0" y="935.0" width="4" height="4" fill="#cbcbcb"/><rect x="466.0" y="939.0" width="4" height="4" fill="#666666"/><rect x="470.0" y="939.0" width="4" height="4" fill="#dcdcdc"/><rect x="474.0" y="939.0" width="4" height="4" fill="#b4b4b4"/><rect x="486.0" y="939.0" width="4" height="4" fill="#f4f4f4"/><rect x="494.0" y="939.0" width="4" height="4" fill="#666666"/><rect x="502.0" y="939.0" width="4" height="4" fill="#737373"/><rect x="506.0" y="939.0" width="4" height="4" fill="#9c9c9c"/><rect x="510.0" y="939.0" width="4" height="4" fill="#f4f4f4"/><rect x="514.0" y="939.0" width="4" height="4" fill="#737373"/><rect x="518.0" y="939.0" width="4" height="4" fill="#666666"/><rect x="522.0" y="939.0" width="8" height="4" fill="#dcdcdc"/><rect x="530.0" y="939.0" width="4" height="4" fill="#f4f4f4"/><rect x="538.0" y="939.0" width="4" height="4" fill="#f4f4f4"/><rect x="550.0" y="939.0" width="4" height="4" fill="#dcdcdc"/><rect x="554.0" y="939.0" width="4" height="4" fill="#f4f4f4"/><rect x="562.0" y="939.0" width="8" height="4" fill="#cbcbcb"/><rect x="574.0" y="939.0" width="4" height="4" fill="#737373"/><rect x="578.0" y="939.0" width="4" height="4" fill="#f4f4f4"/><rect x="582.0" y="939.0" width="4" height="4" fill="#cbcbcb"/><rect x="606.0" y="939.0" width="4" height="4" fill="#cbcbcb"/><rect x="610.0" y="939.0" width="4" height="4" fill="#f4f4f4"/><rect x="466.0" y="943.0" width="4" height="4" fill="#737373"/><rect x="470.0" y="943.0" width="4" height="4" fill="#cbcbcb"/><rect x="474.0" y="943.0" width="4" height="4" fill="#b4b4b4"/><rect x="486.0" y="943.0" width="4" height="4" fill="#f4f4f4"/><rect x="494.0" y="943.0" width="4" height="4" fill="#737373"/><rect x="502.0" y="943.0" width="4" height="4" fill="#737373"/><rect x="506.0" y="943.0" width="4" height="4" fill="#b4b4b4"/><rect x="510.0" y="943.0" width="4" height="4" fill="#f4f4f4"/><rect x="514.0" y="943.0" width="4" height="4" fill="#828282"/><rect x="518.0" y="943.0" width="4" height="4" fill="#737373"/><rect x="522.0" y="943.0" width="12" height="4" fill="#dcdcdc"/><rect x="538.0" y="943.0" width="4" height="4" fill="#f4f4f4"/><rect x="546.0" y="943.0" width="4" height="4" fill="#8f8f8f"/><rect x="550.0" y="943.0" width="4" height="4" fill="#dcdcdc"/><rect x="558.0" y="943.0" width="4" height="4" fill="#666666"/><rect x="562.0" y="943.0" width="8" height="4" fill="#cbcbcb"/><rect x="574.0" y="943.0" width="4" height="4" fill="#828282"/><rect x="578.0" y="943.0" width="4" height="4" fill="#f4f4f4"/><rect x="582.0" y="943.0" width="4" height="4" fill="#cbcbcb"/><rect x="598.0" y="943.0" width="4" height="4" fill="#f4f4f4"/><rect x="606.0" y="943.0" width="4" height="4" fill="#cbcbcb"/><rect x="610.0" y="943.0" width="4" height="4" fill="#f4f4f4"/><rect x="517.0" y="1053.0" width="4" height="4" fill="#cbcbcb"/><rect x="525.0" y="1053.0" width="4" height="4" fill="#737373"/><rect x="589.0" y="1053.0" width="4" height="4" fill="#cbcbcb"/><rect x="505.0" y="1057.0" width="4" height="4" fill="#b4b4b4"/><rect x="517.0" y="1057.0" width="4" height="4" fill="#cbcbcb"/><rect x="525.0" y="1057.0" width="4" height="4" fill="#737373"/><rect x="529.0" y="1057.0" width="4" height="4" fill="#828282"/><rect x="537.0" y="1057.0" width="4" height="4" fill="#f4f4f4"/><rect x="573.0" y="1057.0" width="4" height="4" fill="#f4f4f4"/><rect x="577.0" y="1057.0" width="4" height="4" fill="#828282"/><rect x="581.0" y="1057.0" width="4" height="4" fill="#737373"/><rect x="585.0" y="1057.0" width="4" height="4" fill="#dcdcdc"/><rect x="589.0" y="1057.0" width="4" height="4" fill="#cbcbcb"/><rect x="597.0" y="1057.0" width="4" height="4" fill="#b4b4b4"/><rect x="505.0" y="1061.0" width="4" height="4" fill="#b4b4b4"/><rect x="513.0" y="1061.0" width="4" height="4" fill="#828282"/><rect x="517.0" y="1061.0" width="4" height="4" fill="#cbcbcb"/><rect x="525.0" y="1061.0" width="8" height="4" fill="#737373"/><rect x="557.0" y="1061.0" width="4" height="4" fill="#dcdcdc"/><rect x="573.0" y="1061.0" width="4" height="4" fill="#f4f4f4"/><rect x="577.0" y="1061.0" width="8" height="4" fill="#828282"/><rect x="585.0" y="1061.0" width="4" height="4" fill="#dcdcdc"/><rect x="589.0" y="1061.0" width="4" height="4" fill="#cbcbcb"/><rect x="597.0" y="1061.0" width="4" height="4" fill="#828282"/></svg><div class="t" style="left:1665.5px;width:80px;text-align:right;top:581.6px;font-size:16.1px;color:#1c1c1c">7115</div><div class="t" style="left:653.5px;width:80px;text-align:right;top:699.4px;font-size:16.1px;color:#1c1c1c">276</div><div class="t" style="left:628.1px;width:80px;text-align:right;top:817.2px;font-size:16.1px;color:#1c1c1c">104</div><div class="t" style="left:623.6px;width:80px;text-align:right;top:935.1px;font-size:16.1px;color:#1c1c1c">74</div><div class="t" style="left:616.0px;width:80px;text-align:right;top:1052.9px;font-size:16.1px;color:#1c1c1c">22</div><div class="t" style="left:591.5px;width:80px;text-align:center;top:1138.2px;font-size:15.7px;color:#666">0</div><div class="t" style="left:739.2px;width:80px;text-align:center;top:1138.2px;font-size:15.7px;color:#666">1.000</div><div class="t" style="left:887.0px;width:80px;text-align:center;top:1138.2px;font-size:15.7px;color:#666">2.000</div><div class="t" style="left:1034.7px;width:80px;text-align:center;top:1138.2px;font-size:15.7px;color:#666">3.000</div><div class="t" style="left:1182.5px;width:80px;text-align:center;top:1138.2px;font-size:15.7px;color:#666">4.000</div><div class="t" style="left:1330.2px;width:80px;text-align:center;top:1138.2px;font-size:15.7px;color:#666">5.000</div><div class="t" style="left:1477.9px;width:80px;text-align:center;top:1138.2px;font-size:15.7px;color:#666">6.000</div><div class="t" style="left:1625.7px;width:80px;text-align:center;top:1138.2px;font-size:15.7px;color:#666">7.000</div><div class="t" style="left:1773.4px;width:80px;text-align:center;top:1138.2px;font-size:15.7px;color:#666">8.000</div><div class="abs" style="left:428px;top:1226px;width:1410px;height:38.59999999999991px;background:#dddddd;border-top:1px solid #d7d7d7;border-left:1px solid #d7d7d7"></div><div class="abs" style="left:658px;top:1227px;width:1px;height:37.59999999999991px;background:#f3f3f3"></div><div class="abs" style="left:902px;top:1227px;width:1px;height:37.59999999999991px;background:#f3f3f3"></div><div class="abs" style="left:1132px;top:1227px;width:1px;height:37.59999999999991px;background:#f3f3f3"></div><div class="abs" style="left:1405px;top:1227px;width:1px;height:37.59999999999991px;background:#f3f3f3"></div><div class="abs" style="left:1650px;top:1227px;width:1px;height:37.59999999999991px;background:#f3f3f3"></div><div class="abs" style="left:1837px;top:1227px;width:1px;height:37.59999999999991px;background:#f3f3f3"></div><div class="abs" style="left:428px;top:1264.6px;width:1px;height:324.4000000000001px;background:#dedede"></div><div class="abs" style="left:658px;top:1264.6px;width:1px;height:324.4000000000001px;background:#dedede"></div><div class="abs" style="left:902px;top:1264.6px;width:1px;height:324.4000000000001px;background:#dedede"></div><div class="abs" style="left:1132px;top:1264.6px;width:1px;height:324.4000000000001px;background:#dedede"></div><div class="abs" style="left:1405px;top:1264.6px;width:1px;height:324.4000000000001px;background:#dedede"></div><div class="abs" style="left:1650px;top:1264.6px;width:1px;height:324.4000000000001px;background:#dedede"></div><div class="abs" style="left:1837px;top:1264.6px;width:1px;height:324.4000000000001px;background:#dedede"></div><div class="abs" style="left:428px;top:1318px;width:1410px;height:1px;background:#dedede"></div><div class="abs" style="left:428px;top:1372px;width:1410px;height:1px;background:#dedede"></div><div class="abs" style="left:428px;top:1426px;width:1410px;height:1px;background:#dedede"></div><div class="abs" style="left:428px;top:1480px;width:1410px;height:1px;background:#dedede"></div><div class="abs" style="left:428px;top:1534px;width:1410px;height:1px;background:#dedede"></div><div class="abs" style="left:428px;top:1588px;width:1410px;height:1px;background:#dedede"></div><div class="t" style="left:428px;width:230px;text-align:center;top:1237.3px;font-size:16.25px;font-weight:bold;color:#2c3e50">Attack Count</div><div class="abs" style="left:429px;top:1274.4px;width:6px;height:34.6px;background:#ffc84a"></div><div class="t" style="left:448.8px;top:1284.4px;font-size:16.05px;color:#3a4756">Cross Site Scripting</div><div class="t" style="left:659px;width:243px;text-align:center;top:1284.4px;font-size:16.05px;color:#3a4756">3306</div><div class="t" style="left:903px;width:229px;text-align:center;top:1284.4px;font-size:16.05px;color:#3a4756">3</div><div class="t" style="left:1133px;width:272px;text-align:center;top:1284.4px;font-size:16.05px;color:#3a4756">0</div><div class="t" style="left:1406px;width:244px;text-align:center;top:1284.4px;font-size:16.05px;color:#3a4756">0</div><div class="t" style="left:1651px;width:186px;text-align:center;top:1284.4px;font-size:16.05px;color:#3a4756">22</div><div class="abs" style="left:429px;top:1328.4px;width:6px;height:34.6px;background:#ffc84a"></div><div class="t" style="left:448.8px;top:1338.4px;font-size:16.05px;color:#3a4756">File Access Violation</div><div class="t" style="left:659px;width:243px;text-align:center;top:1338.4px;font-size:16.05px;color:#3a4756">0</div><div class="t" style="left:903px;width:229px;text-align:center;top:1338.4px;font-size:16.05px;color:#3a4756">61</div><div class="t" style="left:1133px;width:272px;text-align:center;top:1338.4px;font-size:16.05px;color:#3a4756">6</div><div class="t" style="left:1406px;width:244px;text-align:center;top:1338.4px;font-size:16.05px;color:#3a4756">0</div><div class="t" style="left:1651px;width:186px;text-align:center;top:1338.4px;font-size:16.05px;color:#3a4756">0</div><div class="abs" style="left:429px;top:1382.4px;width:6px;height:34.6px;background:#ffc84a"></div><div class="t" style="left:448.8px;top:1392.4px;font-size:16.05px;color:#3a4756">Other</div><div class="t" style="left:659px;width:243px;text-align:center;top:1392.4px;font-size:16.05px;color:#3a4756">37</div><div class="t" style="left:903px;width:229px;text-align:center;top:1392.4px;font-size:16.05px;color:#3a4756">164</div><div class="t" style="left:1133px;width:272px;text-align:center;top:1392.4px;font-size:16.05px;color:#3a4756">23</div><div class="t" style="left:1406px;width:244px;text-align:center;top:1392.4px;font-size:16.05px;color:#3a4756">0</div><div class="t" style="left:1651px;width:186px;text-align:center;top:1392.4px;font-size:16.05px;color:#3a4756">0</div><div class="abs" style="left:429px;top:1436.4px;width:6px;height:34.6px;background:#ffc84a"></div><div class="t" style="left:448.8px;top:1446.4px;font-size:16.05px;color:#3a4756">Protocol Violation</div><div class="t" style="left:659px;width:243px;text-align:center;top:1446.4px;font-size:16.05px;color:#3a4756">3772</div><div class="t" style="left:903px;width:229px;text-align:center;top:1446.4px;font-size:16.05px;color:#3a4756">1</div><div class="t" style="left:1133px;width:272px;text-align:center;top:1446.4px;font-size:16.05px;color:#3a4756">74</div><div class="t" style="left:1406px;width:244px;text-align:center;top:1446.4px;font-size:16.05px;color:#3a4756">74</div><div class="t" style="left:1651px;width:186px;text-align:center;top:1446.4px;font-size:16.05px;color:#3a4756">0</div><div class="abs" style="left:429px;top:1490.4px;width:6px;height:34.6px;background:#ffc84a"></div><div class="t" style="left:448.8px;top:1500.4px;font-size:16.05px;color:#3a4756">SQL Data Leakage</div><div class="t" style="left:659px;width:243px;text-align:center;top:1500.4px;font-size:16.05px;color:#3a4756">0</div><div class="t" style="left:903px;width:229px;text-align:center;top:1500.4px;font-size:16.05px;color:#3a4756">0</div><div class="t" style="left:1133px;width:272px;text-align:center;top:1500.4px;font-size:16.05px;color:#3a4756">1</div><div class="t" style="left:1406px;width:244px;text-align:center;top:1500.4px;font-size:16.05px;color:#3a4756">0</div><div class="t" style="left:1651px;width:186px;text-align:center;top:1500.4px;font-size:16.05px;color:#3a4756">0</div><div class="abs" style="left:429px;top:1544.4px;width:6px;height:34.6px;background:#ffc84a"></div><div class="t" style="left:448.8px;top:1554.4px;font-size:16.05px;color:#3a4756">URL Access Violation</div><div class="t" style="left:659px;width:243px;text-align:center;top:1554.4px;font-size:16.05px;color:#3a4756">0</div><div class="t" style="left:903px;width:229px;text-align:center;top:1554.4px;font-size:16.05px;color:#3a4756">47</div><div class="t" style="left:1133px;width:272px;text-align:center;top:1554.4px;font-size:16.05px;color:#3a4756">0</div><div class="t" style="left:1406px;width:244px;text-align:center;top:1554.4px;font-size:16.05px;color:#3a4756">0</div><div class="t" style="left:1651px;width:186px;text-align:center;top:1554.4px;font-size:16.05px;color:#3a4756">0</div><svg class="abs" style="left:660px;top:1228px" width="1180" height="34" viewBox="660 1228 1180 34" shape-rendering="crispEdges"><rect x="699.0" y="1238.0" width="4" height="4" fill="#c69453"/><rect x="747.0" y="1238.0" width="4" height="4" fill="#e6cf9a"/><rect x="763.0" y="1238.0" width="4" height="4" fill="#c69453"/><rect x="771.0" y="1238.0" width="4" height="4" fill="#c5e8e8"/><rect x="783.0" y="1238.0" width="4" height="4" fill="#6b3548"/><rect x="807.0" y="1238.0" width="4" height="4" fill="#2e3a55"/><rect x="691.0" y="1242.0" width="4" height="4" fill="#2e3a55"/><rect x="699.0" y="1242.0" width="4" height="4" fill="#c69453"/><rect x="711.0" y="1242.0" width="4" height="4" fill="#2e3a55"/><rect x="723.0" y="1242.0" width="4" height="4" fill="#2e3a55"/><rect x="731.0" y="1242.0" width="4" height="4" fill="#b5dde6"/><rect x="735.0" y="1242.0" width="8" height="4" fill="#2e3a55"/><rect x="747.0" y="1242.0" width="4" height="4" fill="#e6cf9a"/><rect x="755.0" y="1242.0" width="4" height="4" fill="#b5dde6"/><rect x="759.0" y="1242.0" width="4" height="4" fill="#6b3548"/><rect x="763.0" y="1242.0" width="4" height="4" fill="#c69453"/><rect x="771.0" y="1242.0" width="4" height="4" fill="#c5e8e8"/><rect x="775.0" y="1242.0" width="4" height="4" fill="#2e3a55"/><rect x="783.0" y="1242.0" width="4" height="4" fill="#2e3a55"/><rect x="787.0" y="1242.0" width="4" height="4" fill="#c69453"/><rect x="795.0" y="1242.0" width="8" height="4" fill="#b5dde6"/><rect x="807.0" y="1242.0" width="4" height="4" fill="#2e3a55"/><rect x="811.0" y="1242.0" width="4" height="4" fill="#c69453"/><rect x="819.0" y="1242.0" width="4" height="4" fill="#e8dfb5"/><rect x="827.0" y="1242.0" width="8" height="4" fill="#2e3a55"/><rect x="835.0" y="1242.0" width="4" height="4" fill="#e8dfb5"/><rect x="851.0" y="1242.0" width="4" height="4" fill="#e8dfb5"/><rect x="855.0" y="1242.0" width="4" height="4" fill="#2e3a55"/><rect x="859.0" y="1242.0" width="4" height="4" fill="#33409a"/><rect x="691.0" y="1246.0" width="8" height="4" fill="#2e3a55"/><rect x="703.0" y="1246.0" width="4" height="4" fill="#7fbbe8"/><rect x="707.0" y="1246.0" width="4" height="4" fill="#2e3a55"/><rect x="719.0" y="1246.0" width="4" height="4" fill="#c69453"/><rect x="723.0" y="1246.0" width="4" height="4" fill="#2e3a55"/><rect x="731.0" y="1246.0" width="4" height="4" fill="#2e3a55"/><rect x="735.0" y="1246.0" width="4" height="4" fill="#3a78c0"/><rect x="739.0" y="1246.0" width="4" height="4" fill="#2e3a55"/><rect x="743.0" y="1246.0" width="4" height="4" fill="#9b6a4a"/><rect x="751.0" y="1246.0" width="4" height="4" fill="#3a78c0"/><rect x="755.0" y="1246.0" width="8" height="4" fill="#2e3a55"/><rect x="763.0" y="1246.0" width="4" height="4" fill="#c69453"/><rect x="771.0" y="1246.0" width="4" height="4" fill="#c5e8e8"/><rect x="775.0" y="1246.0" width="8" height="4" fill="#2e3a55"/><rect x="787.0" y="1246.0" width="4" height="4" fill="#b5dde6"/><rect x="791.0" y="1246.0" width="4" height="4" fill="#2e3a55"/><rect x="799.0" y="1246.0" width="4" height="4" fill="#2e3a55"/><rect x="803.0" y="1246.0" width="4" height="4" fill="#3a78c0"/><rect x="807.0" y="1246.0" width="4" height="4" fill="#2e3a55"/><rect x="811.0" y="1246.0" width="4" height="4" fill="#c69453"/><rect x="815.0" y="1246.0" width="4" height="4" fill="#e8dfb5"/><rect x="823.0" y="1246.0" width="4" height="4" fill="#2e3a55"/><rect x="827.0" y="1246.0" width="4" height="4" fill="#3a78c0"/><rect x="835.0" y="1246.0" width="4" height="4" fill="#e8dfb5"/><rect x="847.0" y="1246.0" width="4" height="4" fill="#b5dde6"/><rect x="851.0" y="1246.0" width="8" height="4" fill="#2e3a55"/><rect x="859.0" y="1246.0" width="4" height="4" fill="#6b3548"/><rect x="863.0" y="1246.0" width="4" height="4" fill="#2e3a55"/><rect x="707.0" y="1250.0" width="4" height="4" fill="#2e3a55"/><rect x="711.0" y="1250.0" width="4" height="4" fill="#d4e4e6"/><rect x="731.0" y="1250.0" width="4" height="4" fill="#b5dde6"/><rect x="992.0" y="1237.0" width="4" height="4" fill="#3a78c0"/><rect x="1000.0" y="1237.0" width="4" height="4" fill="#6b3548"/><rect x="1024.0" y="1237.0" width="4" height="4" fill="#2e3a55"/><rect x="1044.0" y="1237.0" width="4" height="4" fill="#7fbbe8"/><rect x="1072.0" y="1237.0" width="4" height="4" fill="#2e3a55"/><rect x="932.0" y="1241.0" width="4" height="4" fill="#e8dfb5"/><rect x="940.0" y="1241.0" width="4" height="4" fill="#3a78c0"/><rect x="944.0" y="1241.0" width="4" height="4" fill="#2e3a55"/><rect x="948.0" y="1241.0" width="4" height="4" fill="#9b6a4a"/><rect x="952.0" y="1241.0" width="4" height="4" fill="#e8c9a0"/><rect x="960.0" y="1241.0" width="4" height="4" fill="#d4e4e6"/><rect x="964.0" y="1241.0" width="4" height="4" fill="#7fbbe8"/><rect x="968.0" y="1241.0" width="8" height="4" fill="#2e3a55"/><rect x="976.0" y="1241.0" width="4" height="4" fill="#a03344"/><rect x="980.0" y="1241.0" width="4" height="4" fill="#c69453"/><rect x="988.0" y="1241.0" width="4" height="4" fill="#7fbbe8"/><rect x="992.0" y="1241.0" width="4" height="4" fill="#3a78c0"/><rect x="1000.0" y="1241.0" width="4" height="4" fill="#6b3548"/><rect x="1004.0" y="1241.0" width="4" height="4" fill="#e8c9a0"/><rect x="1012.0" y="1241.0" width="8" height="4" fill="#d4e4e6"/><rect x="1020.0" y="1241.0" width="4" height="4" fill="#7fbbe8"/><rect x="1024.0" y="1241.0" width="4" height="4" fill="#2e3a55"/><rect x="1028.0" y="1241.0" width="4" height="4" fill="#d98c4a"/><rect x="1032.0" y="1241.0" width="4" height="4" fill="#e8c9a0"/><rect x="1044.0" y="1241.0" width="4" height="4" fill="#7fbbe8"/><rect x="1052.0" y="1241.0" width="4" height="4" fill="#6b3548"/><rect x="1056.0" y="1241.0" width="4" height="4" fill="#e8dfb5"/><rect x="1064.0" y="1241.0" width="4" height="4" fill="#d4e4e6"/><rect x="1068.0" y="1241.0" width="4" height="4" fill="#7fbbe8"/><rect x="1072.0" y="1241.0" width="4" height="4" fill="#2e3a55"/><rect x="1080.0" y="1241.0" width="4" height="4" fill="#c69453"/><rect x="1084.0" y="1241.0" width="4" height="4" fill="#f0d8a8"/><rect x="1092.0" y="1241.0" width="4" height="4" fill="#b5dde6"/><rect x="1096.0" y="1241.0" width="4" height="4" fill="#3a78c0"/><rect x="932.0" y="1245.0" width="4" height="4" fill="#e8dfb5"/><rect x="940.0" y="1245.0" width="4" height="4" fill="#3a78c0"/><rect x="944.0" y="1245.0" width="4" height="4" fill="#2e3a55"/><rect x="948.0" y="1245.0" width="4" height="4" fill="#9b6a4a"/><rect x="952.0" y="1245.0" width="4" height="4" fill="#e8c9a0"/><rect x="960.0" y="1245.0" width="4" height="4" fill="#d4e4e6"/><rect x="968.0" y="1245.0" width="12" height="4" fill="#2e3a55"/><rect x="980.0" y="1245.0" width="4" height="4" fill="#c69453"/><rect x="988.0" y="1245.0" width="4" height="4" fill="#7fbbe8"/><rect x="992.0" y="1245.0" width="4" height="4" fill="#3a78c0"/><rect x="1000.0" y="1245.0" width="4" height="4" fill="#6b3548"/><rect x="1004.0" y="1245.0" width="4" height="4" fill="#e8c9a0"/><rect x="1012.0" y="1245.0" width="8" height="4" fill="#d4e4e6"/><rect x="1020.0" y="1245.0" width="4" height="4" fill="#33409a"/><rect x="1024.0" y="1245.0" width="4" height="4" fill="#2e3a55"/><rect x="1028.0" y="1245.0" width="4" height="4" fill="#6b3548"/><rect x="1032.0" y="1245.0" width="4" height="4" fill="#e8dfb5"/><rect x="1044.0" y="1245.0" width="4" height="4" fill="#7fbbe8"/><rect x="1052.0" y="1245.0" width="4" height="4" fill="#6b3548"/><rect x="1056.0" y="1245.0" width="4" height="4" fill="#d4e4e6"/><rect x="1064.0" y="1245.0" width="4" height="4" fill="#d4e4e6"/><rect x="1072.0" y="1245.0" width="4" height="4" fill="#2e3a55"/><rect x="1080.0" y="1245.0" width="4" height="4" fill="#a03344"/><rect x="1084.0" y="1245.0" width="4" height="4" fill="#e8c9a0"/><rect x="1092.0" y="1245.0" width="4" height="4" fill="#b5dde6"/><rect x="1096.0" y="1245.0" width="4" height="4" fill="#3a78c0"/><rect x="944.0" y="1249.0" width="4" height="4" fill="#2e3a55"/><rect x="980.0" y="1249.0" width="4" height="4" fill="#c69453"/><rect x="1233.0" y="1240.0" width="4" height="4" fill="#2e3a55"/><rect x="1257.0" y="1240.0" width="4" height="4" fill="#2e3a55"/><rect x="1281.0" y="1240.0" width="4" height="4" fill="#2e3a55"/><rect x="1289.0" y="1240.0" width="4" height="4" fill="#6b3548"/><rect x="1321.0" y="1240.0" width="4" height="4" fill="#d4e4e6"/><rect x="1341.0" y="1240.0" width="4" height="4" fill="#2e3a55"/><rect x="1169.0" y="1244.0" width="4" height="4" fill="#3a78c0"/><rect x="1173.0" y="1244.0" width="4" height="4" fill="#6b3548"/><rect x="1177.0" y="1244.0" width="8" height="4" fill="#2e3a55"/><rect x="1189.0" y="1244.0" width="4" height="4" fill="#2e3a55"/><rect x="1193.0" y="1244.0" width="4" height="4" fill="#d98c4a"/><rect x="1201.0" y="1244.0" width="4" height="4" fill="#3a78c0"/><rect x="1205.0" y="1244.0" width="4" height="4" fill="#2e3a55"/><rect x="1209.0" y="1244.0" width="4" height="4" fill="#33409a"/><rect x="1213.0" y="1244.0" width="4" height="4" fill="#2e3a55"/><rect x="1221.0" y="1244.0" width="4" height="4" fill="#e8dfb5"/><rect x="1225.0" y="1244.0" width="4" height="4" fill="#2e3a55"/><rect x="1229.0" y="1244.0" width="4" height="4" fill="#e8c9a0"/><rect x="1233.0" y="1244.0" width="4" height="4" fill="#2e3a55"/><rect x="1237.0" y="1244.0" width="4" height="4" fill="#9b6a4a"/><rect x="1241.0" y="1244.0" width="4" height="4" fill="#2e3a55"/><rect x="1245.0" y="1244.0" width="4" height="4" fill="#e8dfb5"/><rect x="1253.0" y="1244.0" width="4" height="4" fill="#3a78c0"/><rect x="1257.0" y="1244.0" width="4" height="4" fill="#2e3a55"/><rect x="1261.0" y="1244.0" width="4" height="4" fill="#3a78c0"/><rect x="1265.0" y="1244.0" width="4" height="4" fill="#2e3a55"/><rect x="1273.0" y="1244.0" width="4" height="4" fill="#7fbbe8"/><rect x="1277.0" y="1244.0" width="4" height="4" fill="#d4e4e6"/><rect x="1281.0" y="1244.0" width="4" height="4" fill="#2e3a55"/><rect x="1285.0" y="1244.0" width="4" height="4" fill="#7fbbe8"/><rect x="1289.0" y="1244.0" width="4" height="4" fill="#6b3548"/><rect x="1293.0" y="1244.0" width="4" height="4" fill="#33409a"/><rect x="1301.0" y="1244.0" width="4" height="4" fill="#d4e4e6"/><rect x="1305.0" y="1244.0" width="4" height="4" fill="#7fbbe8"/><rect x="1313.0" y="1244.0" width="4" height="4" fill="#e8dfb5"/><rect x="1317.0" y="1244.0" width="4" height="4" fill="#d4e4e6"/><rect x="1321.0" y="1244.0" width="4" height="4" fill="#6b3548"/><rect x="1325.0" y="1244.0" width="4" height="4" fill="#e8dfb5"/><rect x="1333.0" y="1244.0" width="4" height="4" fill="#d4e4e6"/><rect x="1341.0" y="1244.0" width="4" height="4" fill="#2e3a55"/><rect x="1345.0" y="1244.0" width="4" height="4" fill="#d4e4e6"/><rect x="1349.0" y="1244.0" width="4" height="4" fill="#2e3a55"/><rect x="1353.0" y="1244.0" width="8" height="4" fill="#d4e4e6"/><rect x="1365.0" y="1244.0" width="4" height="4" fill="#d4e4e6"/><rect x="1169.0" y="1248.0" width="4" height="4" fill="#2e3a55"/><rect x="1173.0" y="1248.0" width="4" height="4" fill="#6b3548"/><rect x="1177.0" y="1248.0" width="8" height="4" fill="#2e3a55"/><rect x="1189.0" y="1248.0" width="8" height="4" fill="#2e3a55"/><rect x="1201.0" y="1248.0" width="4" height="4" fill="#7fbbe8"/><rect x="1205.0" y="1248.0" width="8" height="4" fill="#2e3a55"/><rect x="1213.0" y="1248.0" width="4" height="4" fill="#33409a"/><rect x="1225.0" y="1248.0" width="20" height="4" fill="#2e3a55"/><rect x="1253.0" y="1248.0" width="4" height="4" fill="#3a78c0"/><rect x="1257.0" y="1248.0" width="4" height="4" fill="#2e3a55"/><rect x="1265.0" y="1248.0" width="4" height="4" fill="#2e3a55"/><rect x="1273.0" y="1248.0" width="4" height="4" fill="#7fbbe8"/><rect x="1277.0" y="1248.0" width="8" height="4" fill="#2e3a55"/><rect x="1289.0" y="1248.0" width="8" height="4" fill="#2e3a55"/><rect x="1301.0" y="1248.0" width="12" height="4" fill="#2e3a55"/><rect x="1313.0" y="1248.0" width="4" height="4" fill="#33409a"/><rect x="1317.0" y="1248.0" width="8" height="4" fill="#2e3a55"/><rect x="1333.0" y="1248.0" width="24" height="4" fill="#2e3a55"/><rect x="1361.0" y="1248.0" width="4" height="4" fill="#2e3a55"/><rect x="1438.0" y="1236.5" width="4" height="4" fill="#6b3548"/><rect x="1490.0" y="1236.5" width="4" height="4" fill="#7fbbe8"/><rect x="1518.0" y="1236.5" width="4" height="4" fill="#7fbbe8"/><rect x="1554.0" y="1236.5" width="4" height="4" fill="#2e3a55"/><rect x="1558.0" y="1236.5" width="4" height="4" fill="#c69453"/><rect x="1438.0" y="1240.5" width="4" height="4" fill="#6b3548"/><rect x="1442.0" y="1240.5" width="4" height="4" fill="#e8c9a0"/><rect x="1450.0" y="1240.5" width="4" height="4" fill="#33409a"/><rect x="1454.0" y="1240.5" width="4" height="4" fill="#6b3548"/><rect x="1458.0" y="1240.5" width="4" height="4" fill="#e8c9a0"/><rect x="1466.0" y="1240.5" width="4" height="4" fill="#e8dfb5"/><rect x="1470.0" y="1240.5" width="4" height="4" fill="#2e3a55"/><rect x="1474.0" y="1240.5" width="4" height="4" fill="#33409a"/><rect x="1478.0" y="1240.5" width="4" height="4" fill="#e8dfb5"/><rect x="1490.0" y="1240.5" width="4" height="4" fill="#7fbbe8"/><rect x="1494.0" y="1240.5" width="4" height="4" fill="#3a78c0"/><rect x="1498.0" y="1240.5" width="8" height="4" fill="#2e3a55"/><rect x="1506.0" y="1240.5" width="4" height="4" fill="#c69453"/><rect x="1518.0" y="1240.5" width="4" height="4" fill="#7fbbe8"/><rect x="1522.0" y="1240.5" width="8" height="4" fill="#2e3a55"/><rect x="1530.0" y="1240.5" width="4" height="4" fill="#d98c4a"/><rect x="1534.0" y="1240.5" width="4" height="4" fill="#e8c9a0"/><rect x="1546.0" y="1240.5" width="4" height="4" fill="#3a78c0"/><rect x="1550.0" y="1240.5" width="8" height="4" fill="#2e3a55"/><rect x="1558.0" y="1240.5" width="4" height="4" fill="#c69453"/><rect x="1570.0" y="1240.5" width="4" height="4" fill="#3a78c0"/><rect x="1574.0" y="1240.5" width="4" height="4" fill="#2e3a55"/><rect x="1578.0" y="1240.5" width="4" height="4" fill="#6b3548"/><rect x="1582.0" y="1240.5" width="4" height="4" fill="#e8dfb5"/><rect x="1590.0" y="1240.5" width="4" height="4" fill="#d4e4e6"/><rect x="1598.0" y="1240.5" width="4" height="4" fill="#7fbbe8"/><rect x="1602.0" y="1240.5" width="8" height="4" fill="#2e3a55"/><rect x="1610.0" y="1240.5" width="4" height="4" fill="#d98c4a"/><rect x="1438.0" y="1244.5" width="4" height="4" fill="#6b3548"/><rect x="1442.0" y="1244.5" width="4" height="4" fill="#e8dfb5"/><rect x="1450.0" y="1244.5" width="4" height="4" fill="#2e3a55"/><rect x="1454.0" y="1244.5" width="4" height="4" fill="#a03344"/><rect x="1458.0" y="1244.5" width="4" height="4" fill="#e8c9a0"/><rect x="1466.0" y="1244.5" width="4" height="4" fill="#e8dfb5"/><rect x="1470.0" y="1244.5" width="8" height="4" fill="#2e3a55"/><rect x="1478.0" y="1244.5" width="4" height="4" fill="#d4e4e6"/><rect x="1490.0" y="1244.5" width="4" height="4" fill="#7fbbe8"/><rect x="1494.0" y="1244.5" width="8" height="4" fill="#2e3a55"/><rect x="1502.0" y="1244.5" width="4" height="4" fill="#3a78c0"/><rect x="1506.0" y="1244.5" width="4" height="4" fill="#e8c9a0"/><rect x="1518.0" y="1244.5" width="4" height="4" fill="#3a78c0"/><rect x="1522.0" y="1244.5" width="4" height="4" fill="#2e3a55"/><rect x="1526.0" y="1244.5" width="4" height="4" fill="#33409a"/><rect x="1530.0" y="1244.5" width="4" height="4" fill="#2e3a55"/><rect x="1534.0" y="1244.5" width="4" height="4" fill="#e8c9a0"/><rect x="1546.0" y="1244.5" width="12" height="4" fill="#2e3a55"/><rect x="1558.0" y="1244.5" width="4" height="4" fill="#c69453"/><rect x="1570.0" y="1244.5" width="12" height="4" fill="#2e3a55"/><rect x="1582.0" y="1244.5" width="4" height="4" fill="#e8dfb5"/><rect x="1590.0" y="1244.5" width="4" height="4" fill="#d4e4e6"/><rect x="1598.0" y="1244.5" width="4" height="4" fill="#d4e4e6"/><rect x="1602.0" y="1244.5" width="8" height="4" fill="#2e3a55"/><rect x="1610.0" y="1244.5" width="4" height="4" fill="#c69453"/><rect x="1474.0" y="1248.5" width="4" height="4" fill="#2e3a55"/><rect x="1679.0" y="1236.5" width="4" height="4" fill="#2e3a55"/><rect x="1703.0" y="1236.5" width="4" height="4" fill="#3a78c0"/><rect x="1711.0" y="1236.5" width="4" height="4" fill="#c69453"/><rect x="1735.0" y="1236.5" width="4" height="4" fill="#7fbbe8"/><rect x="1747.0" y="1236.5" width="4" height="4" fill="#7fbbe8"/><rect x="1759.0" y="1236.5" width="4" height="4" fill="#c69453"/><rect x="1779.0" y="1236.5" width="4" height="4" fill="#6b3548"/><rect x="1679.0" y="1240.5" width="4" height="4" fill="#2e3a55"/><rect x="1683.0" y="1240.5" width="4" height="4" fill="#e8c9a0"/><rect x="1687.0" y="1240.5" width="4" height="4" fill="#e8dfb5"/><rect x="1691.0" y="1240.5" width="4" height="4" fill="#d4e4e6"/><rect x="1699.0" y="1240.5" width="4" height="4" fill="#3a78c0"/><rect x="1703.0" y="1240.5" width="4" height="4" fill="#33409a"/><rect x="1711.0" y="1240.5" width="4" height="4" fill="#c69453"/><rect x="1723.0" y="1240.5" width="4" height="4" fill="#7fbbe8"/><rect x="1727.0" y="1240.5" width="4" height="4" fill="#3a78c0"/><rect x="1731.0" y="1240.5" width="4" height="4" fill="#2e3a55"/><rect x="1735.0" y="1240.5" width="4" height="4" fill="#6b3548"/><rect x="1739.0" y="1240.5" width="4" height="4" fill="#e8c9a0"/><rect x="1747.0" y="1240.5" width="4" height="4" fill="#7fbbe8"/><rect x="1751.0" y="1240.5" width="4" height="4" fill="#2e3a55"/><rect x="1759.0" y="1240.5" width="4" height="4" fill="#c69453"/><rect x="1767.0" y="1240.5" width="4" height="4" fill="#d4e4e6"/><rect x="1771.0" y="1240.5" width="4" height="4" fill="#3a78c0"/><rect x="1775.0" y="1240.5" width="4" height="4" fill="#2e3a55"/><rect x="1779.0" y="1240.5" width="8" height="4" fill="#6b3548"/><rect x="1791.0" y="1240.5" width="4" height="4" fill="#e6cf9a"/><rect x="1799.0" y="1240.5" width="4" height="4" fill="#d4e4e6"/><rect x="1803.0" y="1240.5" width="4" height="4" fill="#7fbbe8"/><rect x="1807.0" y="1240.5" width="4" height="4" fill="#2e3a55"/><rect x="1679.0" y="1244.5" width="4" height="4" fill="#2e3a55"/><rect x="1683.0" y="1244.5" width="4" height="4" fill="#e8c9a0"/><rect x="1687.0" y="1244.5" width="4" height="4" fill="#e8dfb5"/><rect x="1699.0" y="1244.5" width="4" height="4" fill="#3a78c0"/><rect x="1703.0" y="1244.5" width="4" height="4" fill="#2e3a55"/><rect x="1711.0" y="1244.5" width="4" height="4" fill="#9b6a4a"/><rect x="1723.0" y="1244.5" width="4" height="4" fill="#7fbbe8"/><rect x="1727.0" y="1244.5" width="12" height="4" fill="#2e3a55"/><rect x="1739.0" y="1244.5" width="4" height="4" fill="#e8c9a0"/><rect x="1747.0" y="1244.5" width="4" height="4" fill="#3a78c0"/><rect x="1751.0" y="1244.5" width="4" height="4" fill="#2e3a55"/><rect x="1759.0" y="1244.5" width="4" height="4" fill="#c69453"/><rect x="1767.0" y="1244.5" width="4" height="4" fill="#d4e4e6"/><rect x="1771.0" y="1244.5" width="8" height="4" fill="#2e3a55"/><rect x="1779.0" y="1244.5" width="4" height="4" fill="#6b3548"/><rect x="1783.0" y="1244.5" width="4" height="4" fill="#a03344"/><rect x="1791.0" y="1244.5" width="4" height="4" fill="#d98c4a"/><rect x="1799.0" y="1244.5" width="4" height="4" fill="#7fbbe8"/><rect x="1803.0" y="1244.5" width="4" height="4" fill="#3a78c0"/><rect x="1807.0" y="1244.5" width="4" height="4" fill="#2e3a55"/></svg>
<div class="t" style="left:346px;width:1574px;text-align:center;top:1689px;font-size:18.75px;color:#212529"><span style="color:#22a5da;text-decoration:underline">Toffstech</span> © 2023</div>
<svg class="abs" style="left:1800px;top:1617px" width="94" height="94" viewBox="1800 1617 94 94"><circle cx="1846.5" cy="1663.5" r="40.6" fill="#03a84e"/>
<path d="M1846.6 1643.1C1857 1643.1 1865.3 1651.2 1865.3 1661.3C1865.3 1672.5 1856.5 1678.6 1840 1684.2L1840.4 1680.6C1832.6 1676.6 1827.9 1669.8 1827.9 1661.3C1827.9 1651.2 1836.2 1643.1 1846.6 1643.1Z" fill="#fff"/>
<path d="M1844.8 1670.1Q1851.5 1671.3 1858.2 1670.1C1857.2 1673.6 1854.6 1675.2 1851.5 1675.2C1848.4 1675.2 1845.8 1673.6 1844.8 1670.1Z" fill="#03a84e"/></svg>

</body></html>
